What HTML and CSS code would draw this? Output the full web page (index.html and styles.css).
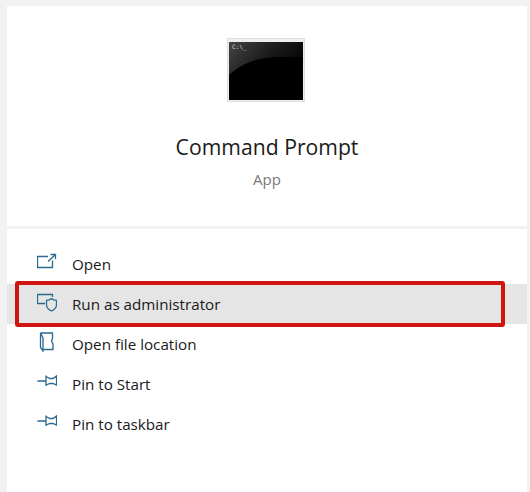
FILE: index.html
```html
<!DOCTYPE html>
<html lang="en">
<head>
  <meta charset="UTF-8">
  <title>Command Prompt</title>
  <link rel="stylesheet" href="styles.css">
</head>
<body>
  <main class="panel">
    <section class="app-head">
      <div class="app-icon">
        <div class="app-screen">
          <svg class="app-gloss" viewBox="0 0 74 58" preserveAspectRatio="none">
            <defs>
              <linearGradient id="gloss" x1="0" y1="0" x2="1" y2="0.4">
                <stop offset="0" stop-color="#444"/>
                <stop offset="0.6" stop-color="#1a1a1a"/>
                <stop offset="1" stop-color="#080808"/>
              </linearGradient>
            </defs>
            <path d="M0 33C12 22 28 15 50 15H74V0H0Z" fill="url(#gloss)"/>
          </svg>
          <span class="app-prompt">C:\_</span>
        </div>
      </div>
      <h1 class="app-name">Command Prompt</h1>
      <div class="app-type">App</div>
    </section>

    <ul class="menu">
      <li class="menu-row">
        <svg class="menu-icon" viewBox="0 0 20 20">
          <path d="M11 4.5H0.5V15.5H15.5V8.5"/>
          <path d="M11 9.5L18.5 2.5M13.5 2.5H18.5V7"/>
        </svg>
        Open
      </li>
      <li class="menu-row selected">
        <svg class="menu-icon" viewBox="0 0 20 20">
          <path d="M8 11.5H0.5V2.5H15.5V5"/>
          <path d="M14.5 6.5C13 7.8 11 8.3 9.5 8.3V13C9.5 16 12.5 18 14.5 19C16.5 18 19.5 16 19.5 13V8.3C18 8.3 16 7.8 14.5 6.5Z"/>
        </svg>
        Run as administrator
        <span class="callout"></span>
      </li>
      <li class="menu-row">
        <svg class="menu-icon" viewBox="0 0 20 20">
          <path d="M3.5 1H15.5V6.5L14.5 9L16 12V17.5H6"/>
          <path d="M3.5 1V15.5L6 19V6Z"/>
        </svg>
        Open file location
      </li>
      <li class="menu-row">
        <svg class="menu-icon" viewBox="0 0 20 20">
          <path d="M0.5 9H9M9 3.5V14M9 4.5L13 6.5H16L19.5 4V13L16 11.5H13L9 13"/>
        </svg>
        Pin to Start
      </li>
      <li class="menu-row">
        <svg class="menu-icon" viewBox="0 0 20 20">
          <path d="M0.5 9H9M9 3.5V14M9 4.5L13 6.5H16L19.5 4V13L16 11.5H13L9 13"/>
        </svg>
        Pin to taskbar
      </li>
    </ul>
  </main>
</body>
</html>
```

FILE: styles.css
```css
* {
  box-sizing: border-box;
  margin: 0; padding: 0;
}
html, body {
  height: 100%;
  overflow: hidden;
  background: #f2f2f2;
  font-family: 'Open Sans', 'Noto Sans', sans-serif;
  color: #1a1a1a;
}
body {
  padding: 6px 3px 0 7px;
}
.panel {
  height: 100%;
  background: #fff;
}

/* App header */
.app-head {
  height: 223px;
  padding-top: 32px;
  display: flex;
  flex-direction: column;
  align-items: center;
  border-bottom: 3px solid #f2f2f2;
}
.app-icon {
  width: 78px; height: 64px;
  padding: 3px 1px 1px;
  margin-left: -2px;
  background: #eceef2;
  border: 1px solid #dcdee2;
}
.app-screen {
  position: relative;
  height: 100%;
  background: #000;
  overflow: hidden;
}
.app-gloss {
  position: absolute;
  inset: 0;
  width: 100%; height: 100%;
}
.app-prompt {
  position: absolute;
  top: 1px; left: 3px;
  font: 6px 'DejaVu Sans Mono', monospace;
  color: #ddd;
}
.app-name {
  margin-top: 28px;
  font-size: 21.2px;
  font-weight: 400;
  line-height: 34px;
}
.app-type {
  margin-top: 4px;
  font-size: 15px;
  line-height: 22px;
  color: #777;
}

/* Actions */
.menu {
  list-style: none;
  padding-top: 15px;
}
.menu-row {
  position: relative;
  height: 40px;
  padding-left: 30px;
  display: flex;
  align-items: center;
  gap: 15px;
  font-size: 15.2px;
}
.menu-row.selected {
  background: #e5e5e5;
}
.menu-icon {
  width: 20px; height: 20px;
  margin-top: -5px;
  fill: none;
  stroke: #2b6a8f;
  stroke-width: 1.3;
}
.callout {
  position: absolute;
  top: -3px; bottom: -3px;
  left: 8px; right: 22px;
  border: 4px solid #d0140f;
  border-radius: 3px;
}
```
